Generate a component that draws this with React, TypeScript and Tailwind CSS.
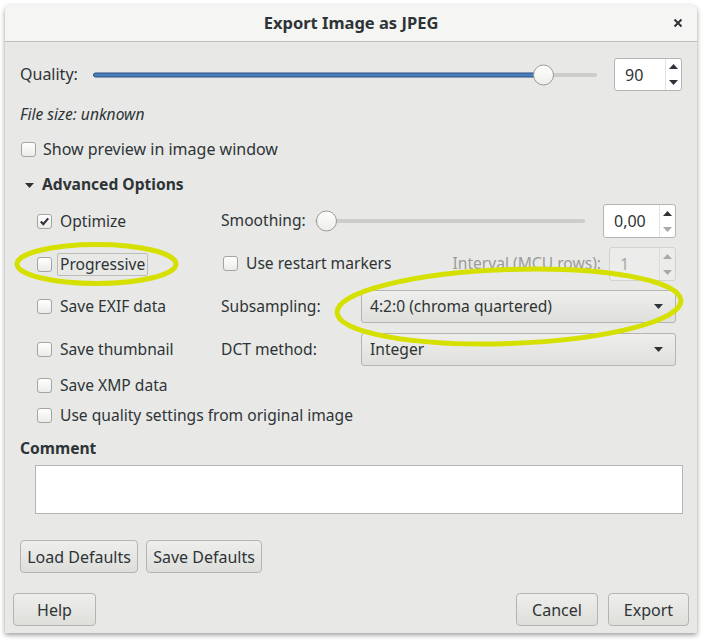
import React from "react";

const ink = "text-[#2e3436]";

function Check({ checked }: { checked?: boolean }) {
  return (
    <span className="w-[15px] h-[15px] shrink-0 rounded-[3px] border border-[#a4a5a1] bg-linear-to-b from-white to-[#ebebe9] flex items-center justify-center">
      {checked && (
        <svg width="11" height="11" viewBox="0 0 11 11">
          <path d="M1.8 5.6 L4.3 8.2 L9.2 2.4" fill="none" stroke="#2e3436" strokeWidth="2.2" />
        </svg>
      )}
    </span>
  );
}

function Arrow({ up, color }: { up?: boolean; color: string }) {
  return (
    <svg width="9" height="5" viewBox="0 0 9 5">
      <path d={up ? "M0 5 L4.5 0 L9 5 Z" : "M0 0 L9 0 L4.5 5 Z"} fill={color} />
    </svg>
  );
}

function Spin({ value, disabled, downMuted }: { value: string; disabled?: boolean; downMuted?: boolean }) {
  return (
    <div
      className={
        "h-full flex rounded-[3px] border " +
        (disabled ? "border-[#d2d2cf] bg-[#ececea]" : "border-[#b4b5b1] bg-white")
      }
    >
      <div className={"flex-1 flex items-center pl-[10px] text-[16px] " + (disabled ? "text-[#a9aaa6]" : ink)}>{value}</div>
      <div className={"w-[16px] flex flex-col border-l " + (disabled ? "border-[#dcdcd9]" : "border-[#e2e2df]")}>
        <div className="flex-1 flex items-center justify-center">
          <Arrow up color={disabled ? "#a9aaa6" : "#2e3436"} />
        </div>
        <div className="flex-1 flex items-center justify-center">
          <Arrow color={disabled || downMuted ? "#a9aaa6" : "#2e3436"} />
        </div>
      </div>
    </div>
  );
}

function Slider({ knob, fill }: { knob: number; fill?: boolean }) {
  return (
    <div className="relative h-full flex items-center">
      <div className="h-[4px] w-full rounded-full bg-[#cdcdca]" />
      {fill && (
        <div
          className="absolute left-0 top-1/2 -translate-y-1/2 h-[5px] rounded-full bg-[#4a7fbd] border border-[#264f80]"
          style={{ width: knob + 10 }}
        />
      )}
      <div
        className="absolute top-1/2 -translate-y-1/2 w-[21px] h-[21px] rounded-full border border-[#9c9d99] bg-linear-to-b from-white to-[#ededeb]"
        style={{ left: knob }}
      />
    </div>
  );
}

function Combo({ text }: { text: string }) {
  return (
    <div className={"h-full flex items-center rounded-[3px] border border-[#b4b5b1] bg-linear-to-b from-[#eeeeec] to-[#dfdfdc] pl-[8px] pr-[12px] " + ink}>
      <span className="flex-1">{text}</span>
      <Arrow color="#2e3436" />
    </div>
  );
}

function Button({ label, w }: { label: string; w: string }) {
  return (
    <div className={"h-full flex items-center justify-center rounded-[4px] border border-[#b4b5b1] bg-linear-to-b from-[#eeeeec] to-[#dededb] text-[16px] " + w + " " + ink}>
      {label}
    </div>
  );
}

function CheckRow({ label, checked, focus }: { label: string; checked?: boolean; focus?: boolean }) {
  return (
    <div className="flex items-center">
      <Check checked={checked} />
      <span
        className={
          "ml-[5px] px-[2px] rounded-[2px] border leading-[21px] " +
          (focus ? "border-[#bcbcb8]" : "border-transparent")
        }
      >
        {label}
      </span>
    </div>
  );
}

export default function App() {
  return (
    <div className={"w-[707px] h-[644px] bg-white pl-[5px] pt-[5px] font-['Noto_Sans',sans-serif] text-[15.6px] " + ink}>
      <div className="relative w-[692px] h-[628px] rounded-t-[6px] bg-[#e8e8e7] shadow-[0_2px_5px_rgba(0,0,0,0.4)] flex flex-col">
        {/* title bar */}
        <div className="h-[37px] shrink-0 rounded-t-[6px] bg-[#f5f5f4] border-b border-[#bfbfbc] flex items-center relative">
          <div className="flex-1 text-center font-bold text-[16.5px]">Export Image as JPEG</div>
          <div className="absolute right-[14px] top-[13px]">
            <svg width="10" height="10" viewBox="0 0 10 10">
              <path d="M1.5 1.5 L8.5 8.5 M8.5 1.5 L1.5 8.5" stroke="#2e3436" strokeWidth="2" />
            </svg>
          </div>
        </div>

        <div className="px-[15px] pt-[16px] flex flex-col">
          {/* quality */}
          <div className="h-[33px] flex items-center">
            <span className="w-[56px] text-[16px] -mt-[2px]">Quality:</span>
            <div className="flex-1 h-full ml-[17px]">
              <Slider knob={440} fill />
            </div>
            <div className="w-[68px] h-full ml-[17px]">
              <Spin value="90" />
            </div>
          </div>

          <div className="h-[24px] mt-[12px] flex items-center italic">File size: unknown</div>

          <div className="h-[24px] mt-[10px] flex items-center pl-[1px] text-[16px]">
            <Check />
            <span className="ml-[7px]">Show preview in image window</span>
          </div>

          <div className="h-[24px] mt-[12px] flex items-center pl-[5px]">
            <Arrow color="#2e3436" />
            <span className="ml-[8px] font-bold">Advanced Options</span>
          </div>

          {/* advanced */}
          <div className="pl-[17px] pr-[6px] flex flex-col">
            <div className="h-[34px] mt-[7px] flex items-center">
              <div className="w-[184px]">
                <CheckRow label="Optimize" checked />
              </div>
              <span className="w-[94px]">Smoothing:</span>
              <div className="flex-1 h-full">
                <Slider knob={1} />
              </div>
              <div className="w-[73px] h-full ml-[18px]">
                <Spin value="0,00" downMuted />
              </div>
            </div>

            <div className="h-[34px] mt-[9px] flex items-center">
              <div className="w-[184px]">
                <CheckRow label="Progressive" focus />
              </div>
              <div className="flex items-center ml-[2px]">
                <Check />
                <span className="ml-[8px]">Use restart markers</span>
              </div>
              <div className="flex-1" />
              <span className="text-[#9a9c98]">Interval (MCU rows):</span>
              <div className="w-[67px] h-full ml-[8px]">
                <Spin value="1" disabled />
              </div>
            </div>

            <div className="h-[33px] mt-[9px] flex items-center">
              <div className="w-[184px]">
                <CheckRow label="Save EXIF data" />
              </div>
              <span className="w-[140px]">Subsampling:</span>
              <div className="flex-1 h-full">
                <Combo text="4:2:0 (chroma quartered)" />
              </div>
            </div>

            <div className="h-[33px] mt-[10px] flex items-center">
              <div className="w-[184px]">
                <CheckRow label="Save thumbnail" />
              </div>
              <span className="w-[140px]">DCT method:</span>
              <div className="flex-1 h-full">
                <Combo text="Integer" />
              </div>
            </div>

            <div className="h-[24px] mt-[7px] flex items-center">
              <CheckRow label="Save XMP data" />
            </div>
            <div className="h-[24px] mt-[6px] flex items-center">
              <CheckRow label="Use quality settings from original image" />
            </div>
          </div>

          <div className="h-[24px] mt-[10px] flex items-center font-bold">Comment</div>
          <div className="h-[49px] mt-[4px] ml-[15px] mr-[-1px] bg-white border border-[#b4b5b1]" />

          <div className="h-[33px] mt-[26px] flex gap-[8px]">
            <Button label="Load Defaults" w="w-[118px]" />
            <Button label="Save Defaults" w="w-[116px]" />
          </div>
        </div>

        <div className="h-[33px] mt-[20px] px-[8px] flex gap-[10px]">
          <Button label="Help" w="w-[83px]" />
          <div className="flex-1" />
          <Button label="Cancel" w="w-[82px]" />
          <Button label="Export" w="w-[81px]" />
        </div>

        {/* annotation ellipses */}
        <svg className="absolute left-0 top-0 pointer-events-none" width="692" height="628" viewBox="0 0 692 628">
          <ellipse cx="91.5" cy="259" rx="79.5" ry="19.5" fill="none" stroke="#d6e000" strokeWidth="5" />
          <ellipse cx="504" cy="301.5" rx="172" ry="37" fill="none" stroke="#d6e000" strokeWidth="5" transform="rotate(-2 504 301.5)" />
        </svg>
      </div>
    </div>
  );
}
